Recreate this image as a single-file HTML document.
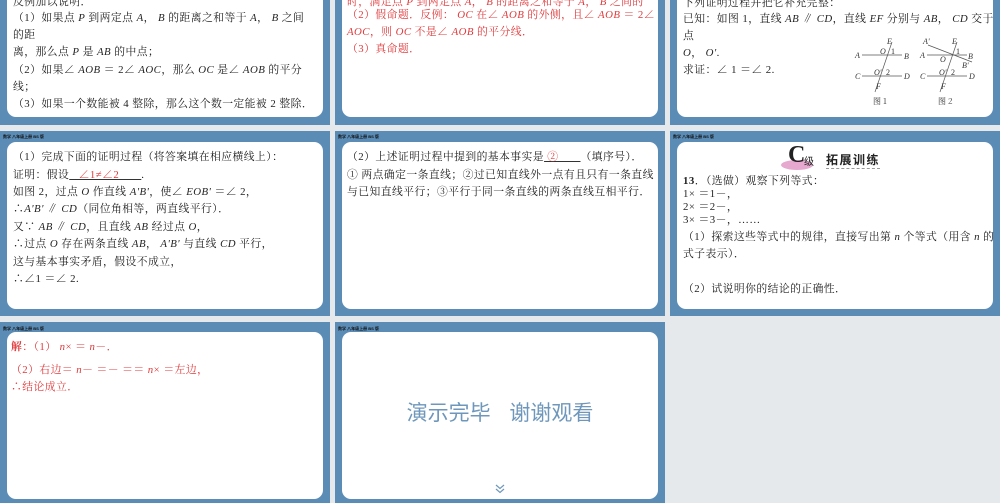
<!DOCTYPE html>
<html><head><meta charset="utf-8"><style>
*{margin:0;padding:0;box-sizing:border-box}
body{width:1000px;height:503px;background:#e6e9ec;position:relative;overflow:hidden;font-family:"Liberation Serif","Noto Serif CJK SC",serif;color:#222}
.s{position:absolute;background:#5b8cb5}
.p{position:absolute;background:#fff;border-radius:9px}
.h{position:absolute;font:bold 4px "Liberation Sans","Noto Sans CJK SC",sans-serif;color:#111;white-space:nowrap}
.t{position:absolute;font-size:10.8px;letter-spacing:0.45px;white-space:nowrap;line-height:13px}
.r{color:#e0383a}
i{font-style:italic}
</style></head><body>
<!-- row1 -->
<div class="s" style="left:0;top:0;width:330px;height:125px"></div>
<div class="s" style="left:335px;top:0;width:330px;height:125px"></div>
<div class="s" style="left:670px;top:0;width:330px;height:125px"></div>
<div class="p" style="left:7px;top:-20px;width:316px;height:137px"></div>
<div class="p" style="left:342px;top:-20px;width:316px;height:137px"></div>
<div class="p" style="left:677px;top:-20px;width:316px;height:137px"></div>
<!-- row2 -->
<div class="s" style="left:0;top:131px;width:330px;height:185px"></div>
<div class="s" style="left:335px;top:131px;width:330px;height:185px"></div>
<div class="s" style="left:670px;top:131px;width:330px;height:185px"></div>
<div class="p" style="left:7px;top:142px;width:316px;height:167px"></div>
<div class="p" style="left:342px;top:142px;width:316px;height:167px"></div>
<div class="p" style="left:677px;top:142px;width:316px;height:167px"></div>
<div class="h" style="left:3px;top:134px">数学 八年级上册 BS 版</div>
<div class="h" style="left:338px;top:134px">数学 八年级上册 BS 版</div>
<div class="h" style="left:673px;top:134px">数学 八年级上册 BS 版</div>
<!-- row3 -->
<div class="s" style="left:0;top:322px;width:330px;height:181px"></div>
<div class="s" style="left:335px;top:322px;width:330px;height:181px"></div>
<div class="p" style="left:7px;top:332px;width:316px;height:167px"></div>
<div class="p" style="left:342px;top:332px;width:316px;height:167px"></div>
<div class="h" style="left:3px;top:326px">数学 八年级上册 BS 版</div>
<div class="h" style="left:338px;top:326px">数学 八年级上册 BS 版</div>

<!-- slide 1 text -->
<div class="t" style="left:13px;top:-4px">反例加以说明．</div>
<div class="t" style="left:13px;top:12px">（1）如果点 <i>P</i> 到两定点 <i>A</i>， <i>B</i> 的距离之和等于 <i>A</i>， <i>B</i> 之间</div>
<div class="t" style="left:13px;top:29px">的距</div>
<div class="t" style="left:13px;top:46px">离，那么点 <i>P</i> 是 <i>AB</i> 的中点；</div>
<div class="t" style="left:13px;top:64px">（2）如果∠ <i>AOB</i> ＝ 2∠ <i>AOC</i>，那么 <i>OC</i> 是∠ <i>AOB</i> 的平分</div>
<div class="t" style="left:13px;top:81px">线；</div>
<div class="t" style="left:13px;top:98px">（3）如果一个数能被 4 整除，那么这个数一定能被 2 整除．</div>

<div class="t r" style="left:347px;top:-4px">时，满足点 <i>P</i> 到两定点 <i>A</i>， <i>B</i> 的距离之和等于 <i>A</i>， <i>B</i> 之间的</div>
<div class="t r" style="left:347px;top:9px">（2）假命题．反例： <i>OC</i> 在∠ <i>AOB</i> 的外侧，且∠ <i>AOB</i> ＝ 2∠</div>
<div class="t r" style="left:347px;top:26px"><i>AOC</i>，则 <i>OC</i> 不是∠ <i>AOB</i> 的平分线．</div>
<div class="t r" style="left:347px;top:43px">（3）真命题．</div>

<div class="t" style="left:683px;top:-3px">下列证明过程并把它补充完整：</div>
<div class="t" style="left:683px;top:13px">已知：如图 1，直线 <i>AB</i> ∥ <i>CD</i>，直线 <i>EF</i> 分别与 <i>AB</i>， <i>CD</i> 交于</div>
<div class="t" style="left:683px;top:30px">点</div>
<div class="t" style="left:683px;top:47px"><i>O</i>， <i>O'</i>.</div>
<div class="t" style="left:683px;top:64px">求证：∠ 1 ＝∠ 2.</div>
<svg style="position:absolute;left:0;top:0" width="1000" height="125" font-family="Liberation Serif" font-size="8" font-style="italic" fill="#333">
<g stroke="#555" stroke-width="0.7">
<line x1="862" y1="55" x2="902" y2="55"/><line x1="862" y1="76" x2="902" y2="76"/><line x1="892" y1="42" x2="875" y2="92"/>
<line x1="927" y1="55" x2="967" y2="55"/><line x1="927" y1="76" x2="967" y2="76"/><line x1="957" y1="42" x2="940" y2="92"/><line x1="928" y1="45" x2="972" y2="62"/>
</g>
<text x="887" y="44">E</text><text x="855" y="58">A</text><text x="880" y="54">O</text><text x="891" y="54" font-style="normal">1</text><text x="904" y="59">B</text>
<text x="855" y="79">C</text><text x="874" y="75">O'</text><text x="886" y="75" font-style="normal">2</text><text x="904" y="79">D</text><text x="876" y="89">F</text>
<text x="952" y="44">E</text><text x="923" y="44">A'</text><text x="920" y="58">A</text><text x="940" y="62">O</text><text x="956" y="54" font-style="normal">1</text><text x="968" y="59">B</text><text x="962" y="68">B'</text>
<text x="920" y="79">C</text><text x="939" y="75">O'</text><text x="951" y="75" font-style="normal">2</text><text x="969" y="79">D</text><text x="941" y="89">F</text>
<text x="873" y="104" font-style="normal" font-family="Noto Serif CJK SC">图 1</text><text x="938" y="104" font-style="normal" font-family="Noto Serif CJK SC">图 2</text>
</svg>

<!-- row2 slide1 -->
<div class="t" style="left:13px;top:151px">（1）完成下面的证明过程（将答案填在相应横线上）：</div>
<div class="t" style="left:13px;top:169px">证明：假设<span class="r" style="text-decoration:underline;text-decoration-color:#333">&nbsp;&nbsp;&nbsp;∠1≠∠2&nbsp;&nbsp;&nbsp;&nbsp;&nbsp;&nbsp;&nbsp;</span>.</div>
<div class="t" style="left:13px;top:186px">如图 2，过点 <i>O</i> 作直线 <i>A'B'</i>，使∠ <i>EOB'</i> ＝∠ 2，</div>
<div class="t" style="left:13px;top:203px">∴<i>A'B'</i> ∥ <i>CD</i>（同位角相等，两直线平行）．</div>
<div class="t" style="left:13px;top:221px">又∵ <i>AB</i> ∥ <i>CD</i>，且直线 <i>AB</i> 经过点 <i>O</i>，</div>
<div class="t" style="left:13px;top:238px">∴过点 <i>O</i> 存在两条直线 <i>AB</i>， <i>A'B'</i> 与直线 <i>CD</i> 平行，</div>
<div class="t" style="left:13px;top:256px">这与基本事实矛盾，假设不成立，</div>
<div class="t" style="left:13px;top:273px">∴∠1 ＝∠ 2.</div>

<div class="t" style="left:347px;top:151px">（2）上述证明过程中提到的基本事实是<span class="r" style="text-decoration:underline;text-decoration-color:#333">&nbsp;②&nbsp;&nbsp;&nbsp;&nbsp;&nbsp;&nbsp;&nbsp;</span>（填序号）．</div>
<div class="t" style="left:347px;top:169px">① 两点确定一条直线；②过已知直线外一点有且只有一条直线</div>
<div class="t" style="left:347px;top:186px">与已知直线平行；③平行于同一条直线的两条直线互相平行．</div>

<div style="position:absolute;left:781px;top:160px;width:32px;height:10px;border-radius:50%;background:#e7a8cf"></div>
<div style="position:absolute;left:788px;top:142px;font:bold 24px 'Liberation Serif',serif;color:#222">C</div>
<div style="position:absolute;left:804px;top:153px;font:10px 'Noto Sans CJK SC',sans-serif;color:#222">级</div>
<div style="position:absolute;left:826px;top:151px;font:bold 12px 'Noto Sans CJK SC',sans-serif;color:#222;letter-spacing:1.5px;border-bottom:1px dashed #999">拓展训练</div>
<div class="t" style="left:683px;top:175px"><b>13</b>．（选做）观察下列等式：</div>
<div class="t" style="left:683px;top:188px">1× ＝1－，</div>
<div class="t" style="left:683px;top:201px">2× ＝2－，</div>
<div class="t" style="left:683px;top:214px">3× ＝3－，……</div>
<div class="t" style="left:683px;top:231px">（1）探索这些等式中的规律，直接写出第 <i>n</i> 个等式（用含 <i>n</i> 的</div>
<div class="t" style="left:683px;top:248px">式子表示）．</div>
<div class="t" style="left:683px;top:283px">（2）试说明你的结论的正确性．</div>

<!-- row3 -->
<div class="t r" style="left:11px;top:341px"><b>解</b>：（1） <i>n</i>× ＝ <i>n</i>－．</div>
<div class="t r" style="left:11px;top:364px">（2）右边＝ <i>n</i>－ ＝－ ＝＝ <i>n</i>× ＝左边，</div>
<div class="t r" style="left:11px;top:381px">∴结论成立．</div>
<div style="position:absolute;left:342px;top:397px;width:316px;text-align:center;font:21px 'Noto Sans CJK SC',sans-serif;color:#6e97bb;white-space:nowrap">演示完毕&nbsp;&nbsp;&nbsp;&nbsp;谢谢观看</div>
<svg style="position:absolute;left:494px;top:483px" width="12" height="12"><path d="M2 2 L6 5.5 L10 2 M2 6 L6 9.5 L10 6" stroke="#6e97bb" stroke-width="1.2" fill="none"/></svg>
</body></html>
